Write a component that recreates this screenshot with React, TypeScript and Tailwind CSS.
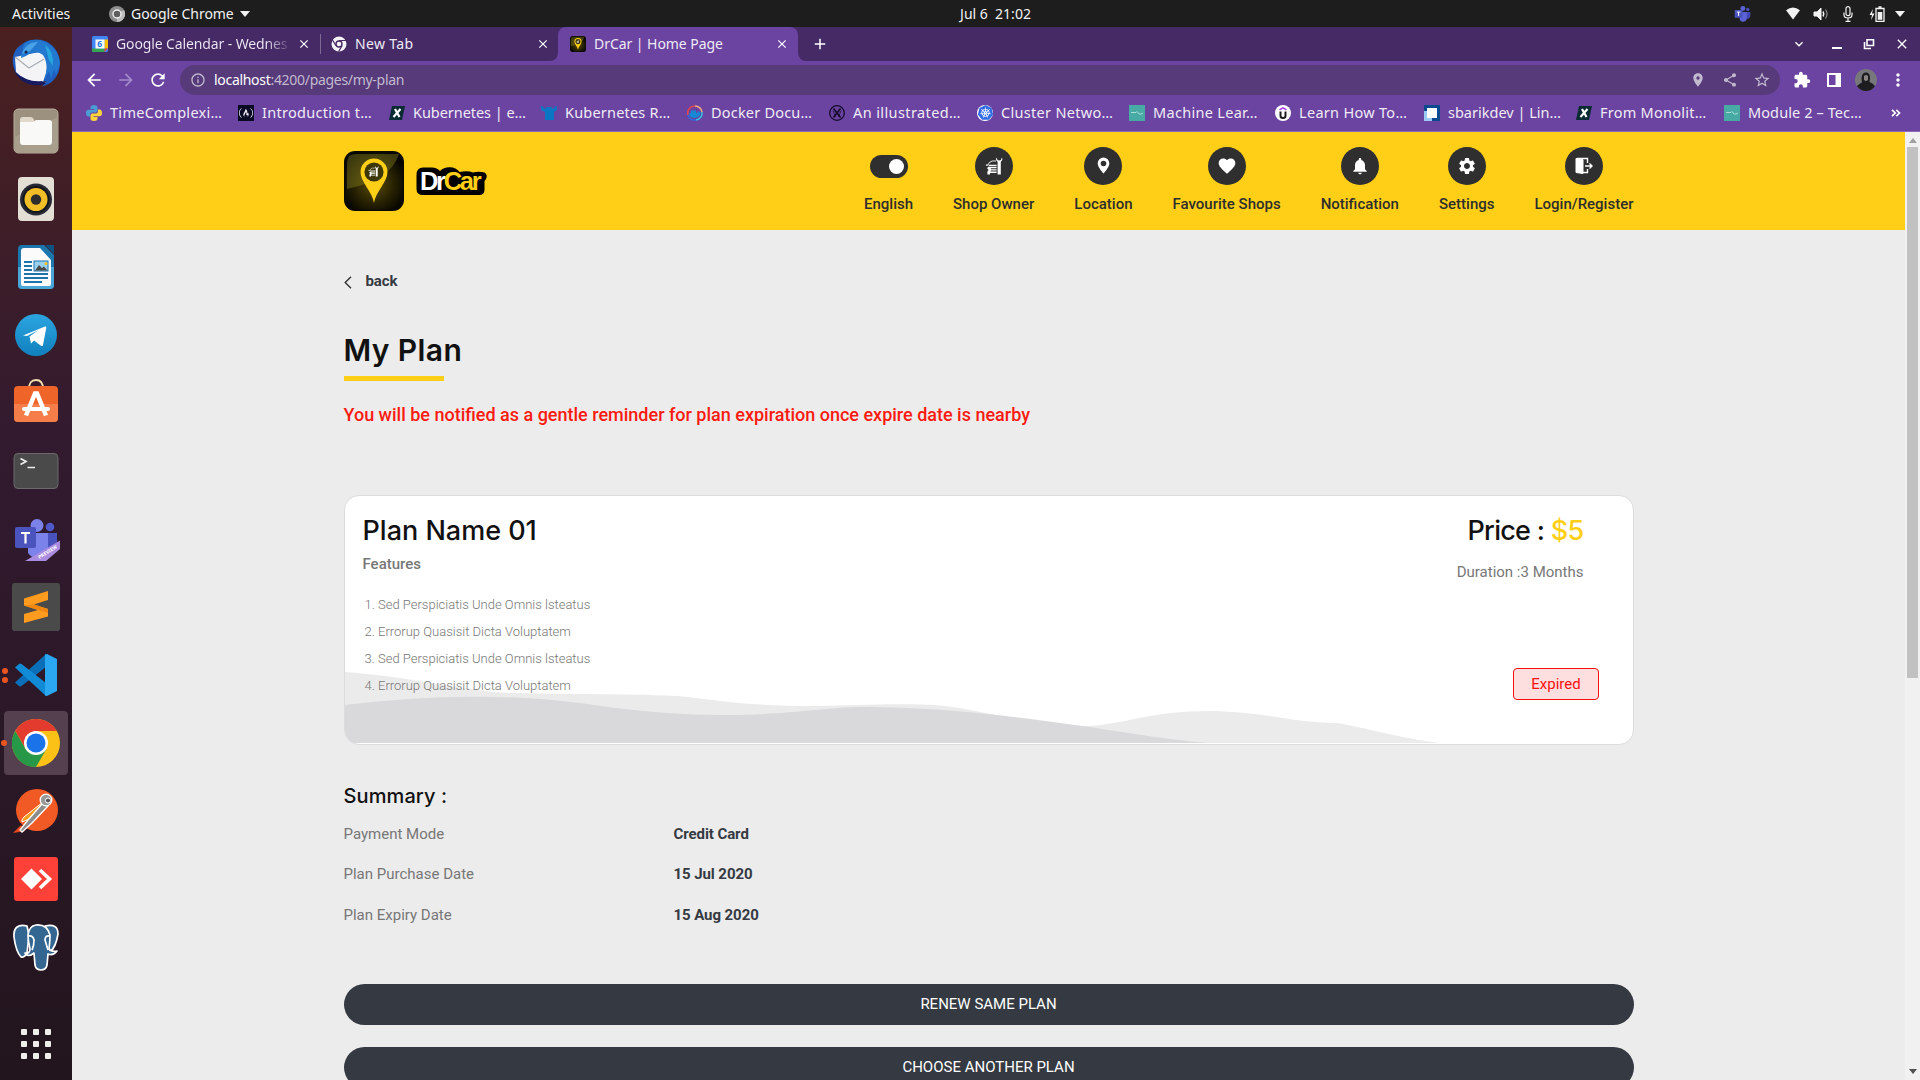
import React from 'react';
import {
  MdArrowBack, MdArrowForward, MdRefresh, MdClose, MdAdd, MdExtension, MdShare, MdStarBorder,
  MdMoreVert, MdLocationOn, MdInfoOutline, MdExpandMore, MdFavorite, MdNotifications, MdSettings,
} from 'react-icons/md';
import { SiFreecodecamp, SiKubernetes } from 'react-icons/si';

/* ---------- shared drawings ---------- */

function CarWrenchShape() {
  return (
    <>
      <path d="M3.600 9.600Q5 5.600 8.200 5H12" fill="none" stroke="currentColor" strokeWidth="0.900" />
      <path d="M1.800 8.600 3.500 8.200 3.800 9.600 2 9.800Z" />
      <path d="M5.200 8.700H12.600V10H4.600ZM4 10.800H12.600V12.200H6.600L7.200 13.300H12.600V14.600H7L6.400 15.600H12.600V17H6V18.400H3.400V15.600L4.600 14 3.200 12.600Z" />
      <path d="M12.500 1.500Q11.200 4 13.600 5.800V18.400H16.800V5.800Q19.200 4 17.900 1.500L16.900 4 15.200 4.600 13.500 4Z" />
    </>
  );
}

function AppBadge({ className }: { className?: string }) {
  return (
    <svg viewBox="0 0 60 60" className={className}>
      <defs>
        <radialGradient id="badgeGlow" cx="0.5" cy="0.55" r="0.6">
          <stop offset="0" stopColor="#5c4e04" />
          <stop offset="0.55" stopColor="#2a2403" />
          <stop offset="1" stopColor="#050400" />
        </radialGradient>
      </defs>
      <rect width="60" height="60" rx="11" fill="#0b0a02" />
      <rect x="1.5" y="1.5" width="57" height="57" rx="10" fill="url(#badgeGlow)" />
      <path d="M3 12Q3 3 12 3H55Q47 29 3 38Z" fill="#8a8322" opacity="0.42" />
      <path d="M30 52C28.600 41 16.500 31 16.500 21a13.500 13.500 0 0 1 27 0C43.500 31 31.400 41 30 52Z" fill="#ffcf17" />
      <circle cx="30" cy="21" r="9.600" fill="#3d3708" />
      <g transform="translate(23.300 14) scale(.62)" fill="#fff" color="#fff"><CarWrenchShape /></g>
    </svg>
  );
}

function TeamsMark({ className }: { className?: string }) {
  return (
    <svg viewBox="0 0 24 24" className={className}>
      <circle cx="12.500" cy="5" r="3.500" fill="#5b62d6" />
      <circle cx="19.500" cy="6.200" r="2.300" fill="#4a51bf" />
      <path d="M16 10h7v6a4 4 0 0 1-7 2Z" fill="#4248b5" />
      <path d="M8 10h10v8a5 5 0 0 1-10 1Z" fill="#5b62d6" />
      <rect x="1" y="7" width="11" height="11" rx="1" fill="#4b53bc" />
      <path d="M4 10h5M6.500 10v5.500" stroke="#fff" strokeWidth="1.400" />
    </svg>
  );
}

/* ---------- system bar ---------- */

function SystemBar() {
  return (
    <header className="grid h-[27px] shrink-0 grid-cols-3 items-center bg-[#1d1d1d] text-[14px] leading-[27px] text-[#f2f2f2]">
      <div className="flex items-center pl-3">
        <span className="w-[97px]">Activities</span>
        <svg viewBox="0 0 16 16" className="size-4">
          <circle cx="8" cy="8" r="8" fill="#8d8d8d" />
          <path d="M8 8 15 4A8 8 0 0 1 8 16Z" fill="#bdbdbd" />
          <circle cx="8" cy="8" r="4" fill="#5e5e5e" stroke="#f0f0f0" strokeWidth="1.400" />
        </svg>
        <span className="ml-[6px] tracking-[-0.05px]">Google Chrome</span>
        <svg viewBox="0 0 10 6" className="ml-[6px] h-[6px] w-[10px]"><path d="M0 0h10L5 6Z" fill="#f2f2f2" /></svg>
      </div>
      <div className="pl-[71px] text-center">
        <span className="whitespace-pre tracking-[0px]">Jul 6  21:02</span>
      </div>
      <div className="flex items-center justify-end pr-[15px]">
        <TeamsMark className="mr-[34px] size-[17px]" />
        <svg viewBox="0 0 16 14" className="mr-[12px] h-[13px] w-4"><path d="M8 13.500 .5 3.500Q8-2.500 15.500 3.500Z" fill="#f2f2f2" /></svg>
        <svg viewBox="0 0 16 14" className="mr-[14px] h-[14px] w-4" fill="none" stroke="#f2f2f2">
          <path d="M1 5h3l4-4v12L4 9H1Z" fill="#f2f2f2" />
          <path d="M10 4.500q1.500 2.500 0 5" strokeWidth="1.500" />
          <path d="M12.500 2.500q3 4.500 0 9" stroke="#8a8a8a" strokeWidth="1.200" />
        </svg>
        <svg viewBox="0 0 10 16" className="mr-[16px] h-4 w-[10px]" fill="none" stroke="#f2f2f2" strokeWidth="1.200">
          <rect x="3" y="0.700" width="4" height="9" rx="2" />
          <path d="M1 6.500V9q0 3 4 3t4-3V6.500M5 12v3M2.500 15.300h5" />
        </svg>
        <svg viewBox="0 0 16 16" className="mr-[10px] size-[16px]">
          <path d="M4 3 .5 9H3l-1 5 3.500-6.500H3Z" fill="#f2f2f2" />
          <path d="M7 2.500h8v13H7ZM9.500 1h3" fill="none" stroke="#f2f2f2" strokeWidth="1.300" />
          <path d="M8.700 6h4.600v7.800H8.700Z" fill="#f2f2f2" />
        </svg>
        <svg viewBox="0 0 10 6" className="h-[6px] w-[10px]"><path d="M0 0h10L5 6Z" fill="#f2f2f2" /></svg>
      </div>
    </header>
  );
}

/* ---------- dock ---------- */

const dockIcons: { name: string; dots?: number; active?: boolean; art: React.ReactNode }[] = [
  {
    name: 'mail',
    art: (
      <>
        <path d="M24 1C34-1 47 8 48 24 48 36 41 45 30 47.500L34 42C20 46 4 42 1 26 0 18 2 10 9 6Q16 0 24 1Z" fill="#1f5fc0" />
        <path d="M3 18 32 12Q38 20 34 34L31 43Q14 44 4 33Z" fill="#f4f4f6" />
        <path d="M3 18 17 29 32 20" fill="none" stroke="#a9adb5" strokeWidth="1.200" />
        <path d="M1 24 3 33Q16 44 30 42L34 45Q20 49 9 41 1 34 1 24Z" fill="#181a60" />
        <path d="M13 4Q24-3 35 4 47 11 48 24L44 36 42 30 39 40 37 32 33 40Q37 25 31 16 24 10 14 17L9 19Q10 9 13 4Z" fill="#2279cf" />
        <path d="M10 15Q14 3 26 3L18 12Q12 14 10 15Z" fill="#4aa3e6" />
        <path d="M33 6Q42 12 41 27L37 21Z" fill="#27a5dc" />
        <circle cx="14" cy="13" r="1.500" fill="#10204f" />
      </>
    ),
  },
  {
    name: 'files',
    art: (
      <>
        <rect x="2" y="2" width="44" height="44" rx="4.500" fill="#9c917e" stroke="#b7ae9d" />
        <path d="M2.500 30 46 10V42Q46 45.500 42 45.500H6Q2.500 45.500 2.500 42Z" fill="#a89e8c" />
        <path d="M8 13q0-3 3-3h8q2 0 3 3l1 2H8Z" fill="#e0d8c9" />
        <path d="M8 15h13l3-2h13q3 0 3 3v19q0 3-3 3H11q-3 0-3-3Z" fill="#f9f9f7" />
      </>
    ),
  },
  {
    name: 'music',
    art: (
      <>
        <rect x="6" y="2" width="36" height="44" rx="4" fill="#e4dfd5" />
        <circle cx="24" cy="24.500" r="16" fill="#272a35" />
        <circle cx="24" cy="24.500" r="13.500" fill="#14161d" />
        <circle cx="24" cy="24.500" r="11.500" fill="#f2be27" />
        <circle cx="24" cy="24.500" r="5.200" fill="#2d2d2d" />
      </>
    ),
  },
  {
    name: 'writer',
    art: (
      <>
        <path d="M10 2H32L42 12V42Q42 46 38 46H10Q6 46 6 42V6Q6 2 10 2Z" fill="#1c77ae" />
        <path d="M6 24H42V42Q42 46 38 46H10Q6 46 6 42Z" fill="#4aa6d6" />
        <path d="M33 2H42V11Z" fill="#0d5483" />
        <path d="M12 5H28L39 17V41Q39 43 37 43H11Q9 43 9 41V8Q9 5 12 5Z" fill="#fbfbfb" />
        <path d="M12 19h8M12 23h8M12 27h8M12 31h24M12 35h24M12 39h18" stroke="#1c74ab" strokeWidth="2" />
        <rect x="22" y="18" width="14" height="10" fill="#9bd0ee" stroke="#1c74ab" />
        <path d="M23 27.500 27 22l3 3 2-1.500 3.500 4Z" fill="#4a4a4a" />
        <circle cx="34" cy="20.500" r="1.500" fill="#f5c02c" />
      </>
    ),
  },
  {
    name: 'telegram',
    art: (
      <>
        <defs>
          <linearGradient id="tg" x1="0" y1="0" x2="0" y2="1"><stop offset="0" stopColor="#2ba5e0" /><stop offset="1" stopColor="#1180bd" /></linearGradient>
        </defs>
        <circle cx="24" cy="24" r="21" fill="url(#tg)" />
        <path d="M11 24.500 33 15.500q1.500-.4 1.300 1.300L31 34q-.4 1.700-2 .8L22 29.500l-3 3-1.500-7 9-6.500-11.500 6Z" fill="#fff" />
      </>
    ),
  },
  {
    name: 'software',
    art: (
      <>
        <path d="M17 10q0-9 7-9t7 9" fill="none" stroke="#f4dfae" strokeWidth="1.800" />
        <rect x="2" y="7" width="44" height="36" rx="4" fill="#ef6428" />
        <path d="M2 25H46V39Q46 43 42 43H6Q2 43 2 39Z" fill="#f47d49" />
        <path d="M14 36.500 23 14.500h2l9 22" fill="none" stroke="#fff" strokeWidth="4.500" />
        <rect x="10" y="28" width="28" height="4" rx="2" fill="#fff" />
      </>
    ),
  },
  {
    name: 'terminal',
    art: (
      <>
        <rect x="2" y="6.500" width="44" height="35" rx="4" fill="#4a4a4a" stroke="#6a6a6a" />
        <path d="M8.500 11.500 14 14.500 8.500 17.500M15.500 20.500H23" fill="none" stroke="#eee" strokeWidth="1.700" />
      </>
    ),
  },
  {
    name: 'teams',
    art: (
      <>
        <circle cx="25" cy="10.500" r="6.500" fill="#7b83eb" />
        <circle cx="38" cy="12" r="4.300" fill="#5059c9" />
        <path d="M34 18H45V32a9 9 0 0 1-11 6Z" fill="#4a52bd" />
        <path d="M16 18H36V33a11 11 0 0 1-20 5Z" fill="#7b83eb" />
        <rect x="3" y="12" width="21" height="21" rx="2" fill="#4b53bc" />
        <path d="M9 18h9M13.500 18v10.500" stroke="#fff" strokeWidth="2.200" />
        <path d="M13 46 48 25.500V34L34 46Z" fill="#a98be0" />
        <text x="0" y="0" transform="translate(27.500 44) rotate(-32)" fontSize="4.800" fontWeight="700" fill="#fff">PREVIEW</text>
      </>
    ),
  },
  {
    name: 'sublime',
    art: (
      <>
        <rect x="0" y="0" width="48" height="48" rx="2.500" fill="#4a4a4a" />
        <path d="M36 8V17L22 21.500 36 26V33.500L12 40V31L26 27 12 22.500V15.500Z" fill="#ff9b1e" />
        <path d="M12 22.500 26 27 36 30V26L22 21.500Z" fill="#ef8612" />
      </>
    ),
  },
  {
    name: 'vscode',
    dots: 2,
    art: (
      <>
        <path d="M34 3 3 31.500 7 35Q8 36 9.500 35L34 16Z" fill="#0a6fb8" />
        <path d="M34 45 3 16.500 7 13Q8 12 9.500 13L34 32Z" fill="#118bd6" />
        <path d="M33 3.500 35 3 45 8V40L35 45 33 44.500Z" fill="#2aa7f0" />
      </>
    ),
  },
  {
    name: 'chrome',
    dots: 1,
    active: true,
    art: (
      <>
        <circle cx="24" cy="24" r="24" fill="#fbc116" />
        <path d="M3.200 12A24 24 0 0 1 44.800 12H24L13.600 30Z" fill="#e33b2e" />
        <path d="M3.200 12A24 24 0 0 0 24 48L34.400 30 24 36 13.600 30Z" fill="#279847" />
        <circle cx="24" cy="24" r="12" fill="#fff" />
        <circle cx="24" cy="24" r="9.500" fill="#1a73e8" />
      </>
    ),
  },
  {
    name: 'postman',
    art: (
      <>
        <circle cx="25" cy="23" r="21" fill="#f15a24" />
        <path d="M1 46 9 38l4 6Z" fill="#e8481c" />
        <path d="M31 15 12 30Q9 33 10 35L22 30 33 20Z" fill="#f59c1a" stroke="#fff" />
        <path d="M30 17 16 33 8 43l2 2 10-9L36 19Z" fill="#8c8c8c" stroke="#fff" strokeWidth="1.300" />
        <circle cx="34" cy="13" r="5.800" fill="#999" stroke="#fff" strokeWidth="1.300" />
        <circle cx="36" cy="13.500" r="2.500" fill="#555" stroke="#fff" />
      </>
    ),
  },
  {
    name: 'anydesk',
    art: (
      <>
        <rect x="2" y="2" width="44" height="44" rx="3" fill="#fe4138" />
        <path d="M19.500 13.500 30 24 19.500 34.500 9 24Z" fill="#fff" />
        <path d="M28 15 37.500 24 28 33" fill="none" stroke="#fff" strokeWidth="3.600" />
      </>
    ),
  },
  {
    name: 'postgres',
    art: (
      <g fill="#336791" stroke="#fff" strokeWidth="1.700" strokeLinejoin="round">
        <path d="M15 3Q1 0 2 14 4 29 9 34q3 1 6-4l2-18Z" />
        <path d="M33 3Q46 0 46 11 44 24 38 29L34 28Z" />
        <path d="M24 2Q35 1 38 12 38 19 37 26q2 3 8 2-4 5-9 3l-1 11q-1 5-6 5-5 0-6-5l-1-12q-6 5-9 0 5 1 5-4-2-8-2-14Q17 3 24 2Z" />
        <path d="M16 13q5-1 6 4 0 6-2 10M38 13q-5-1-5 4l3 10" fill="none" />
      </g>
    ),
  },
];

function Dock() {
  return (
    <aside className="flex w-[72px] shrink-0 flex-col bg-linear-to-b from-[#4a201f] via-[#321a2f] via-40% to-[#22151d] pt-[2px]">
      {dockIcons.map((d) => (
        <div key={d.name} className="flex h-[68px] items-center pr-[4px]">
          <div className="flex w-[4px] flex-col items-center gap-[3px]">
            {d.dots && !d.active ? Array.from({ length: d.dots }, (_, i) => <i key={i} className="ml-[6px] size-[6px] shrink-0 rounded-full bg-[#e95420]" />) : null}
          </div>
          <div className={d.active ? 'flex size-16 items-center justify-center rounded-[4px] bg-[#54404f]' : 'flex size-16 items-center justify-center'}>
            {d.active ? <i className="-ml-[5px] mr-[5px] size-[6px] shrink-0 rounded-full bg-[#e95420]" /> : null}
            <svg viewBox="0 0 48 48" className={d.active ? 'mr-[6px] size-12 shrink-0' : 'size-12 shrink-0'}>{d.art}</svg>
          </div>
        </div>
      ))}
      <div className="mt-auto mb-[21px] grid grid-cols-3 gap-[6px] self-center">
        {Array.from({ length: 9 }, (_, i) => <i key={i} className="size-[6px] rounded-[1px] bg-[#f0efec]" />)}
      </div>
    </aside>
  );
}

/* ---------- browser ---------- */

function TabStrip() {
  return (
    <div className="flex h-[34px] bg-[#452a66] text-[14px] leading-[34px] text-[#efeaf5]">
      <div className="flex w-[248px] items-center pl-5">
        <svg viewBox="0 0 16 16" className="size-4 shrink-0">
          <rect width="16" height="16" rx="1.500" fill="#4285f4" />
          <path d="M12.500 3.500H16V12.500H12.500Z" fill="#fbbc04" />
          <path d="M0 12.500H12.500V16H1.500Q0 16 0 14.500Z" fill="#34a853" />
          <path d="M12.500 12.500H16L12.500 16Z" fill="#ea4335" />
          <rect x="3.500" y="3.500" width="9" height="9" fill="#fff" />
          <text x="5.300" y="11.200" fontSize="8.500" fontWeight="700" fill="#1a73e8">6</text>
        </svg>
        <span className="ml-2 w-[176px] overflow-hidden whitespace-nowrap bg-linear-to-r from-[#efeaf5] from-85% to-transparent bg-clip-text text-transparent tracking-[-0.12px]">Google Calendar - Wednes</span>
        <MdClose className="ml-[5px] size-[14px] shrink-0 text-white" />
      </div>
      <i className="mt-[7px] h-5 w-px bg-[#7d6994]" />
      <div className="flex w-[237px] items-end">
        <div className="flex h-full flex-1 items-center pl-[10px]">
          <svg viewBox="0 0 16 16" className="size-4 shrink-0">
            <circle cx="8" cy="8" r="7.500" fill="#f5f2f8" />
            <circle cx="8" cy="8" r="3" fill="#f5f2f8" stroke="#452a66" strokeWidth="1.400" />
            <path d="M8 4.500h7M5 9.700 1.500 4M11 9.800 7.700 15.500" stroke="#452a66" strokeWidth="1.200" />
          </svg>
          <span className="ml-2 flex-1 tracking-[0.35px]">New Tab</span>
          <MdClose className="size-[14px] text-white" />
        </div>
        <svg viewBox="0 0 8 8" className="size-2"><path d="M8 0A8 8 0 0 1 0 8H8Z" fill="#6b43a1" /></svg>
      </div>
      <div className="flex w-[240px] items-center rounded-t-lg bg-[#6b43a1] pl-[12px]">
        <AppBadge className="size-4 shrink-0" />
        <span className="ml-2 flex-1 tracking-[-0.05px]">DrCar | Home Page</span>
        <MdClose className="mr-[9px] size-[14px] text-white" />
      </div>
      <svg viewBox="0 0 8 8" className="size-2 self-end"><path d="M0 0A8 8 0 0 0 8 8H0Z" fill="#6b43a1" /></svg>
      <MdAdd className="mt-[8px] ml-[5px] size-[18px] text-white" />
      <div className="ml-auto flex items-center pr-[10px] text-white">
        <MdExpandMore className="mr-[24px] size-4" />
        <svg viewBox="0 0 12 12" className="mr-[20px] size-3"><path d="M1 10h10" stroke="#fff" strokeWidth="2" /></svg>
        <svg viewBox="0 0 12 12" className="mr-[19px] size-3" fill="none" stroke="#fff" strokeWidth="1.600">
          <path d="M4 1.800h6.500v5.700H4ZM1.500 4v6.500H8" />
        </svg>
        <MdClose className="size-4" />
      </div>
    </div>
  );
}

function Toolbar() {
  return (
    <div className="flex h-[38px] items-center bg-[#6b43a1] text-white">
      <MdArrowBack className="ml-[12px] size-[20px]" />
      <MdArrowForward className="ml-[12px] size-[20px] text-[#a58bc8]" />
      <MdRefresh className="ml-[12px] size-[20px]" />
      <div className="ml-[12px] flex h-[30px] w-[1600px] items-center rounded-full bg-[#563a7a] pr-[9px] pl-[10px] text-[#c3b9cf]">
        <MdInfoOutline className="size-4" />
        <span className="ml-[8px] flex-1 text-[14px] leading-[30px] tracking-[-0.3px]"><span className="text-white">localhost</span>:4200/pages/my-plan</span>
        <MdLocationOn className="mr-4 size-4" />
        <MdShare className="mr-[15px] size-4" />
        <MdStarBorder className="size-[18px]" />
      </div>
      <MdExtension className="ml-[13px] size-[18px]" />
      <svg viewBox="0 0 14 14" className="ml-[16px] size-[14px]"><path d="M1 1h12v12H1Z" fill="none" stroke="#fff" strokeWidth="2" /><path d="M8.500 1H13v12H8.500Z" fill="#fff" /></svg>
      <svg viewBox="0 0 22 22" className="ml-[14px] size-[22px]">
        <circle cx="11" cy="11" r="11" fill="#77777c" />
        <path d="M2 17Q5 14 7 13.500L6.500 9Q7 3.500 11 3.500t4 5.500l-.5 4q3 1 5.500 4Q17 22 11 22T2 17Z" fill="#1d1d20" />
        <path d="M9 7q2-2 4 0v3.500q-2 3-4 0Z" fill="#8a8583" />
      </svg>
      <MdMoreVert className="ml-[11px] size-[20px]" />
    </div>
  );
}

const kodeX = (
  <svg viewBox="0 0 16 16" className="size-4"><path d="M3 1h13l-3 14H0Z" fill="#0b2b33" /><path d="M6 4l4.500 8M11.500 4 4.500 12" stroke="#fff" strokeWidth="2.200" /></svg>
);
const tealSquare = (
  <svg viewBox="0 0 16 16" className="size-4"><rect width="16" height="16" fill="#47aaa4" /><path d="M2 7.500h5l1-1 2 2.500h2l2-1" fill="none" stroke="#a9dcd8" strokeWidth="1" /></svg>
);

const bookmarks = [
  { label: 'TimeComplexi…', cell: 'w-[152px] tracking-[0.3px]', icon: (
    <svg viewBox="0 0 16 16" className="size-4">
      <path d="M8 0Q4.500 0 4.500 2.500V4H8.500V4.700H2.500Q0 4.700 0 8T2.500 11.500H4V9.500Q4 7.500 6 7.500H9.500Q11.500 7.500 11.500 5.500V2.500Q11.500 0 8 0Z" fill="#4b9bd5" />
      <path d="M8 16Q11.500 16 11.500 13.500V12H7.500V11.300H13.500Q16 11.300 16 8T13.500 4.500H12V6.500Q12 8.500 10 8.500H6.500Q4.500 8.500 4.500 10.500V13.500Q4.500 16 8 16Z" fill="#ffd43b" />
    </svg>) },
  { label: 'Introduction t…', cell: 'w-[151px] tracking-[0.3px]', icon: <span className="flex size-4 items-center justify-center bg-[#0a0a23]"><SiFreecodecamp className="size-[14px]" /></span> },
  { label: 'Kubernetes | e…', cell: 'w-[152px] tracking-[-0.05px]', icon: kodeX },
  { label: 'Kubernetes R…', cell: 'w-[146px] tracking-[0.2px]', icon: (
    <svg viewBox="0 0 16 16" className="size-4"><path d="M0 1h1.500l1.500 2.500h2L5.500 2h5l.5 1.500h2L14.500 1H16v4l-3 2v8H4V7L0 5Z" fill="#0b76c4" /></svg>) },
  { label: 'Docker Docu…', cell: 'w-[142px] tracking-[0.2px]', icon: (
    <svg viewBox="0 0 16 16" className="size-4" fill="none" strokeWidth="1.500">
      <path d="M1 10A7 7 0 0 1 8 1" stroke="#e5484d" /><path d="M8 1a7 7 0 0 1 7 6" stroke="#f5a97f" /><path d="M15 7a7 7 0 0 1-6 8" stroke="#35c2e8" /><path d="M9 15a7 7 0 0 1-8-5" stroke="#2c6be0" />
      <path d="M2 8h8l1.500-2L14 8q-2 5-7 5-4 0-5-5ZM4 5.500h5V8H4Z" fill="#1587d4" />
    </svg>) },
  { label: 'An illustrated…', cell: 'w-[148px] tracking-[0.4px]', icon: (
    <svg viewBox="0 0 16 16" className="size-4" fill="none" stroke="#150b2b"><circle cx="8" cy="8" r="7.300" strokeWidth="1.300" /><path d="M4.500 3.500 11.500 12.500M11.500 3.500 4.500 12.500" strokeWidth="1.600" /><path d="M4 5.500 6.500 12M12 5.500 9.500 12" strokeWidth="0.700" /></svg>) },
  { label: 'Cluster Netwo…', cell: 'w-[152px] tracking-[0.3px]', icon: <span className="flex size-4 items-center justify-center rounded-full bg-white"><SiKubernetes className="size-[15px] text-[#326ce5]" /></span> },
  { label: 'Machine Lear…', cell: 'w-[146px] tracking-[0.3px]', icon: tealSquare },
  { label: 'Learn How To…', cell: 'w-[149px] tracking-[0.3px]', icon: (
    <svg viewBox="0 0 16 16" className="size-4"><circle cx="8" cy="8" r="8" fill="#fff" /><path d="M5.500 6.500v4.200q0 2.200 2.500 2.200t2.500-2.200V6.500" fill="none" stroke="#1c1d1f" strokeWidth="2" /><path d="M4.500 4.800 8 2.800l3.500 2" fill="none" stroke="#a435f0" strokeWidth="1.500" /></svg>) },
  { label: 'sbarikdev | Lin…', cell: 'w-[152px] tracking-[0px]', icon: (
    <svg viewBox="0 0 16 16" className="size-4"><rect width="16" height="16" fill="#0b4a8f" /><path d="M0 6h3v7h5v3H0Z" fill="#9cc9f5" /><rect x="3" y="3" width="10" height="10" fill="#fff" /></svg>) },
  { label: 'From Monolit…', cell: 'w-[148px] tracking-[0.25px]', icon: kodeX },
  { label: 'Module 2 – Tec…', cell: 'w-[152px] tracking-[0.1px]', icon: tealSquare },
];

function BookmarksBar() {
  return (
    <nav className="flex h-[33px] items-center border-b border-[#8a6ab4] bg-[#6b43a1] pb-[5px] pl-[14px] text-[14.5px] text-[#f0ebf6]">
      {bookmarks.map((b) => (
        <a key={b.label} className={`flex shrink-0 items-center gap-2 whitespace-nowrap ${b.cell}`}>
          <span className="shrink-0">{b.icon}</span>
          {b.label}
        </a>
      ))}
      <svg viewBox="0 0 10 8" className="ml-[15px] h-2 w-[10px]" fill="none" stroke="#fff" strokeWidth="1.700"><path d="M1 .8 4.200 4 1 7.200M5.300 .8 8.500 4 5.300 7.200" /></svg>
    </nav>
  );
}

/* ---------- page ---------- */

const navItems = [
  { label: 'Shop Owner', icon: <svg viewBox="0 0 20 20" className="size-5" fill="currentColor"><CarWrenchShape /></svg> },
  { label: 'Location', icon: (
    <svg viewBox="0 0 14 18" className="-mt-px h-[17px] w-[13px]"><path d="M7 .5A6.300 6.300 0 0 0 .7 6.800C.7 11 7 17.500 7 17.500s6.300-6.500 6.300-10.700A6.300 6.300 0 0 0 7 .5Zm0 3.300a3 3 0 1 1 0 6 3 3 0 0 1 0-6Z" fill="#fff" /></svg>) },
  { label: 'Favourite Shops', icon: <MdFavorite className="size-[20px]" /> },
  { label: 'Notification', icon: <MdNotifications className="size-[20px]" /> },
  { label: 'Settings', icon: <MdSettings className="size-[20px]" /> },
  { label: 'Login/Register', icon: (
    <svg viewBox="0 0 18 18" className="size-[18px]" fill="none" stroke="#fff" strokeWidth="1.400">
      <path d="M1 1.500h1l6 1v14l-7-1Z" fill="#fff" strokeWidth="1" /><path d="M2 1.500h10.500v4.500M12.500 12v3.500H8M10 9h7M14.500 6.500 17 9l-2.500 2.500" />
    </svg>) },
];

function SiteHeader() {
  return (
    <header className="flex h-[98px] items-start bg-[#ffcf17] pl-[271.5px]">
      <AppBadge className="mt-[19px] size-[60px]" />
      <svg viewBox="0 0 76 34" className="mt-[32px] ml-[9.5px] h-[34px] w-[76px] font-['Liberation_Sans'] font-bold">
        <path d="M3.500 11Q3.500 3.500 10 3.500H19Q24 3.500 27 7 31 3 37 3.300 43 3.500 46.500 8 55 6.500 60 8.500 66 7 71.500 8.500 75 10.500 73 15L71.500 17V26Q71.500 31 66 31H11Q3.500 31.500 3.500 25Z" fill="#000" />
        <text x="7" y="26.300" fontSize="25.500" letterSpacing="-2.300" fill="#fff">Dr<tspan fill="#ffcf17">Car</tspan></text>
      </svg>
      <nav className="ml-auto flex gap-[40px] pt-[15px] pr-[271.5px] text-[15px] leading-[18px] font-medium text-[#2d2d2d]">
        <div className="flex flex-col items-center">
          <span className="mt-2 flex h-[23px] w-[38px] items-center justify-end rounded-full bg-[#2f2f2f] pr-1"><i className="size-[15px] rounded-full bg-white" /></span>
          <span className="mt-[17px]">English</span>
        </div>
        {navItems.map((n) => (
          <div key={n.label} className="flex flex-col items-center">
            <span className="flex size-[38px] items-center justify-center rounded-full bg-[#2f2f2f] text-white">{n.icon}</span>
            <span className="mt-[10px]">{n.label}</span>
          </div>
        ))}
      </nav>
    </header>
  );
}

const features = [
  'Sed Perspiciatis Unde Omnis lsteatus',
  'Errorup Quasisit Dicta Voluptatem',
  'Sed Perspiciatis Unde Omnis lsteatus',
  'Errorup Quasisit Dicta Voluptatem',
];

const summary = [
  ['Payment Mode', 'Credit Card'],
  ['Plan Purchase Date', '15 Jul 2020'],
  ['Plan Expiry Date', '15 Aug 2020'],
];

function PlanCard() {
  return (
    <section className="relative mt-[58px] flex h-[250px] overflow-hidden rounded-[15px] border border-[#dcdcdc] bg-white">
      <svg viewBox="345 496 1288 248" className="absolute inset-0 size-full">
        <path d="M345 672C400 676 430 684 493 692C540 695 610 693 677 696C720 700 738 706 820 706C850 705 900 703 935 705C990 710 1020 726 1090 726C1125 724 1150 711 1210 711C1270 712 1290 723 1338 723C1370 729 1410 740 1440 743H345Z" fill="#ebebeb" />
        <path d="M345 705C420 696 500 693 580 703C640 712 680 715 730 715C800 714 830 706 870 707C960 708 1020 718 1090 727C1140 735 1180 741 1210 743H345Z" fill="#d9d9db" />
      </svg>
      <div className="relative flex-1 pt-[15px] pl-[18px]">
        <h2 className="font-['Inter'] text-[27px] leading-[40px] font-medium text-[#111]">Plan Name 01</h2>
        <p className="mt-[3px] text-[15px] leading-[20px] font-medium text-[#777]">Features</p>
        <ol className="mt-[17px] pl-[2px] text-[13px] leading-[27px] font-light text-[#777]">
          {features.map((f, i) => (
            <li key={i}>{i + 1}. {f}</li>
          ))}
        </ol>
      </div>
      <div className="relative flex flex-col items-end pt-[15px] pr-[49px]">
        <p className="font-['Inter'] text-[27px] leading-[40px] font-medium tracking-[-0.7px] text-[#111]">Price : <span className="text-[#ffcf17]">$5</span></p>
        <p className="mt-[11px] text-[15px] leading-[20px] text-[#777]">Duration :3 Months</p>
        <span className="mt-[86px] -mr-[15.5px] flex h-8 w-[86px] items-center justify-center rounded-[4px] border border-[#fb0f0f] bg-[#fedfdf] text-[15px] text-[#fb0f0f]">Expired</span>
      </div>
    </section>
  );
}

function Page() {
  return (
    <main className="flex h-[948px]">
      <div className="w-[1833px] bg-[#ececec] font-['Roboto']">
        <SiteHeader />
        <div className="ml-[271.5px] w-[1290px]">
          <div className="flex h-[100px] items-start pt-[41px] text-[15px] leading-[20px] font-bold text-[#353a42]">
            <svg viewBox="0 0 8 13" className="mt-[5px] h-[13px] w-2"><path d="M7 .7 1.200 6.500 7 12.300" fill="none" stroke="#333" strokeWidth="1.400" /></svg>
            <span className="ml-[14px] tracking-[-0.1px]">back</span>
          </div>
          <h1 className="font-['Inter'] text-[30px] leading-[40px] font-semibold tracking-[0.4px] text-[#111]">My Plan</h1>
          <div className="mt-[6px] h-[5px] w-[100px] bg-[#ffcf17]" />
          <p className="mt-[22px] text-[18px] leading-[24px] font-medium text-[#fb1a10]">You will be notified as a gentle reminder for plan expiration once expire date is nearby</p>
          <div className="h-[10px]" />
          <PlanCard />
          <h3 className="mt-[36px] font-['Inter'] text-[20px] leading-[30px] font-medium tracking-[0.1px] text-[#111]">Summary :</h3>
          <dl className="mt-[2.5px] grid grid-cols-[330px_1fr] text-[15px] leading-[40.5px]">
            {summary.map(([k, v]) => (
              <React.Fragment key={k}>
                <dt className="text-[#777]">{k}</dt>
                <dd className="font-bold tracking-[-0.08px] text-[#353a42]">{v}</dd>
              </React.Fragment>
            ))}
          </dl>
          <div className="mt-[48.5px] flex flex-col gap-[22px] text-[15px] text-white">
            <button className="h-[41px] w-full rounded-full bg-[#353a42]">RENEW SAME PLAN</button>
            <button className="h-[41px] w-full rounded-full bg-[#353a42]">CHOOSE ANOTHER PLAN</button>
          </div>
        </div>
      </div>
      <div className="flex w-[15px] flex-col items-center bg-[#f1f1f1]">
        <svg viewBox="0 0 8 5" className="mt-[6px] h-[5px] w-2 shrink-0"><path d="M0 5 4 0 8 5Z" fill="#a0a0a0" /></svg>
        <i className="mt-1 h-[531px] w-[11px] shrink-0 bg-[#c1c1c1]" />
        <svg viewBox="0 0 8 5" className="mt-auto mb-[6px] h-[5px] w-2 shrink-0"><path d="M0 0 4 5 8 0Z" fill="#505050" /></svg>
      </div>
    </main>
  );
}

export default function App() {
  return (
    <div className="flex h-[1080px] w-[1920px] flex-col overflow-hidden font-['Noto_Sans',sans-serif]">
      <SystemBar />
      <div className="flex h-[1053px]">
        <Dock />
        <div className="w-[1848px]">
          <TabStrip />
          <Toolbar />
          <BookmarksBar />
          <Page />
        </div>
      </div>
    </div>
  );
}
